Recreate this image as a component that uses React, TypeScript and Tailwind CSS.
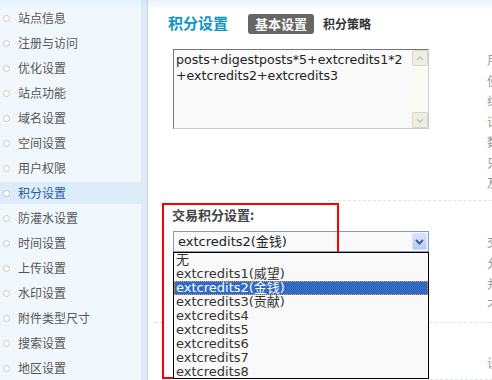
import React from 'react';

const menu = [
  '站点信息', '注册与访问', '优化设置', '站点功能', '域名设置', '空间设置', '用户权限',
  '积分设置', '防灌水设置', '时间设置', '上传设置', '水印设置', '附件类型尺寸', '搜索设置', '地区设置',
];

const options = [
  '无', 'extcredits1(威望)', 'extcredits2(金钱)', 'extcredits3(贡献)', 'extcredits4',
  'extcredits5', 'extcredits6', 'extcredits7', 'extcredits8',
];

const cjk = "font-['Noto_Sans_CJK_SC',sans-serif]";
const latin = "font-['DejaVu_Sans','Noto_Sans_CJK_SC',sans-serif]";

function ScrollBtn({ up }: { up?: boolean }) {
  return (
    <div className="h-[16px] w-[16px] rounded-[2px] border border-[#d9d6c8] bg-[#f0eee4] flex items-center justify-center">
      <svg width="8" height="5" viewBox="0 0 8 5">
        <polyline
          points={up ? '1,4 4,1 7,4' : '1,1 4,4 7,1'}
          fill="none"
          stroke="#bfc4cc"
          strokeWidth="1.5"
        />
      </svg>
    </div>
  );
}

export default function App() {
  return (
    <div className={`w-[492px] h-[380px] overflow-hidden flex bg-white ${cjk}`}>
      {/* Sidebar */}
      <div className="w-[148px] flex shrink-0 border-r border-[#c4d5e1]">
        <div className="w-[141px] pt-[7px] bg-[linear-gradient(#e6f1fa,#f0f8fd_10px)]">
          {menu.map((item) => {
            const active = item === '积分设置';
            return (
              <div
                key={item}
                className={`h-[22px] mb-[3px] flex items-center gap-[8px] pl-[3px] text-[12px] ${
                  active ? 'bg-[#dcedf9] text-[#1f5ea8]' : 'text-[#555]'
                }`}
              >
                <span className="w-[7px] h-[7px] rounded-full border border-[#c6c6c6] bg-white" />
                {item}
              </div>
            );
          })}
        </div>
        <div className="w-[6px] bg-[linear-gradient(#d6e6f2,#dcebf6_10px)]" />
      </div>

      {/* Content */}
      <div className="flex-1 flex flex-col bg-[linear-gradient(#eaf3fb,#ffffff_10px)]">
        <div className="h-[44px] shrink-0 flex items-start pl-[20px] pt-[12px]">
          <span className="text-[15px] leading-[22px] font-bold text-[#0d95c9]">积分设置</span>
          <span className="ml-[20px] mt-[2px] h-[20px] px-[7px] rounded-[3px] bg-[#666] text-white text-[13px] font-bold leading-[20px]">
            基本设置
          </span>
          <span className="ml-[9px] mt-[2px] text-[12px] font-bold leading-[20px] text-[#333]">积分策略</span>
        </div>

        {/* Row 1 */}
        <div className="h-[156px] shrink-0 flex">
          <div className="w-[339px] shrink-0 pl-[25px] pt-[5px]">
            <div className="w-[256px] h-[80px] flex border border-t-[#777] border-l-[#777] border-r-[#ccc] border-b-[#ccc] bg-[#f9f9f9]">
              <div className={`flex-1 pl-[2px] pt-[2px] text-[12.6px] leading-[16px] text-[#222] ${latin}`}>
                posts+digestposts*5+extcredits1*2
                <br />
                +extcredits2+extcredits3
              </div>
              <div className="w-[16px] flex flex-col justify-between bg-[#fbfbf6]">
                <ScrollBtn up />
                <ScrollBtn />
              </div>
            </div>
          </div>
          <div className="pt-[6px] text-[12px] leading-[20.5px] text-[#999] whitespace-nowrap">
            <div>用户总积分的计算公式</div>
            <div>使用的是用户的积分</div>
            <div>综合积分由多项构成</div>
            <div>请谨慎设置计算公式</div>
            <div>数值越大排名越前</div>
            <div>只能使用加减乘除</div>
            <div>及括号运算</div>
          </div>
        </div>

        <div className="flex shrink-0">
          <div className="w-[180px]" />
          <div className="flex-1 border-t border-dashed border-[#d9e6f1]" />
        </div>

        {/* Row 2 */}
        <div className="relative h-[121px] shrink-0 flex">
          <div className="w-[339px] shrink-0 pl-[24px] pt-[6px]">
            <div className="text-[13px] font-bold leading-[16px] text-[#444]">交易积分设置:</div>
            <div className="ml-[1px] mt-[8px] w-[256px] h-[21px] flex items-center border border-[#7f9db9] bg-[#f9f9f9]">
              <span className={`flex-1 pl-[4px] text-[13px] text-[#222] ${latin}`}>extcredits2(金钱)</span>
              <span className="mr-[1px] w-[15px] h-[17px] rounded-[2px] border border-[#d5e0fb] bg-[linear-gradient(#d9e4fd,#b7cbf7)] flex items-center justify-center">
                <svg width="9" height="6" viewBox="0 0 9 6">
                  <polyline points="1,1 4.5,4.5 8,1" fill="none" stroke="#4d6185" strokeWidth="2" />
                </svg>
              </span>
            </div>
          </div>
          <div className="pt-[30px] text-[12px] leading-[21px] text-[#999] whitespace-nowrap">
            <div>交易时使用的积分</div>
            <div>允许用户之间交易</div>
            <div>并可用于购买主题</div>
            <div>不可与其他混用</div>
          </div>

          {/* annotation box */}
          <div className="absolute left-[14px] top-[2px] w-[177px] h-[176px] border-2 border-[#ff0000] pointer-events-none z-10" />

          {/* open select list */}
          <div className={`absolute left-[25px] top-[51px] w-[256px] h-[127px] border border-black bg-[#f9f9f9] z-20 text-[13px] leading-[14px] ${latin}`}>
            {options.map((opt) => {
              const sel = opt === 'extcredits2(金钱)';
              return (
                <div
                  key={opt}
                  className={`h-[14px] pl-[2px] whitespace-nowrap ${
                    sel ? 'bg-[#316ac5] text-white outline outline-1 outline-dotted outline-offset-[-1px] outline-[#e9a43c]' : 'text-[#333]'
                  }`}
                >
                  {opt}
                </div>
              );
            })}
          </div>
        </div>

        <div className="flex shrink-0">
          <div className="w-[7px]" />
          <div className="w-[7px] border-t border-dashed border-[#d8d8d8]" />
          <div className="w-[177px]" />
          <div className="flex-1 border-t border-dashed border-[#d9e6f1]" />
        </div>

        {/* Row 3 */}
        <div className="h-[56px] shrink-0 flex">
          <div className="w-[339px] shrink-0" />
          <div className="pt-[29px] text-[12px] leading-[21px] text-[#999] whitespace-nowrap">
            <div>设置交易的税率</div>
          </div>
        </div>
        <div className="flex shrink-0">
          <div className="w-[282px]" />
          <div className="flex-1 border-t border-dashed border-[#d9e6f1]" />
        </div>
      </div>
    </div>
  );
}
